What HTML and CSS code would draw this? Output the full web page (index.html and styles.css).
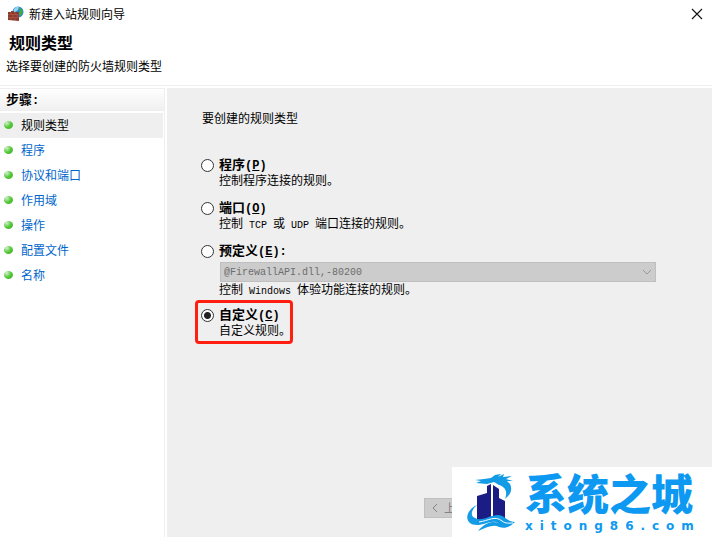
FILE: index.html
```
<!DOCTYPE html>
<html lang="zh-CN">
<head>
    <meta charset="UTF-8">
    <meta name="viewport" content="width=device-width, initial-scale=1.0">
    <title>新建入站规则向导</title>
    <link rel="stylesheet" href="styles.css">
</head>
<body>
    <div class="titlebar">
        <svg class="app-icon" width="16" height="16" viewBox="0 0 16 16" aria-hidden="true">
            <circle cx="10" cy="6" r="5.5" fill="#2f86cf"/>
            <path d="M6 3 Q8 0 11 1 L10 4 L7 6 L5 6Z" fill="#8cd4ef"/>
            <path d="M11 2 L14 3 L15 6 L13 10 L11 8 L12 5Z" fill="#3cac45"/>
            <path d="M0 6 H3 V5 H6 V6 H11 V15 L0 14Z" fill="#8b3b2d"/>
            <path d="M0 8.5 H11 M0 11.5 H11 M3 6 V8 M7 6 V8 M5 9 V11 M9 9 V11 M3 12 V14 M7 12 V14" stroke="#b5614d" stroke-width=".6"/>
        </svg>
        <span class="window-title">新建入站规则向导</span>
        <button class="close" aria-label="关闭">
            <svg width="12" height="12" viewBox="0 0 12 12"><path d="M1 1 L11 11 M11 1 L1 11" stroke="#111" stroke-width="1.1"/></svg>
        </button>
    </div>
    <header class="header">
        <h1>规则类型</h1>
        <p>选择要创建的防火墙规则类型</p>
    </header>
    <div class="wizard">
        <nav class="steps">
            <h2>步骤<span class="latin">:</span></h2>
            <ul>
                <li class="current"><i class="dot"></i><span>规则类型</span></li>
                <li><i class="dot"></i><a href="#">程序</a></li>
                <li><i class="dot"></i><a href="#">协议和端口</a></li>
                <li><i class="dot"></i><a href="#">作用域</a></li>
                <li><i class="dot"></i><a href="#">操作</a></li>
                <li><i class="dot"></i><a href="#">配置文件</a></li>
                <li><i class="dot"></i><a href="#">名称</a></li>
            </ul>
        </nav>
        <main class="content">
            <p class="question">要创建的规则类型</p>
            <form class="options">
                <div class="option">
                    <input type="radio" name="type" id="program">
                    <label for="program">程序<span class="latin">(<u>P</u>)</span></label>
                    <p>控制程序连接的规则。</p>
                </div>
                <div class="option">
                    <input type="radio" name="type" id="port">
                    <label for="port">端口<span class="latin">(<u>O</u>)</span></label>
                    <p>控制<span class="latin"> TCP </span>或<span class="latin"> UDP </span>端口连接的规则。</p>
                </div>
                <div class="option">
                    <input type="radio" name="type" id="predefined">
                    <label for="predefined">预定义<span class="latin">(<u>E</u>):</span></label>
                    <div class="select-wrap">
                        <select disabled aria-label="预定义">
                            <option>@FirewallAPI.dll,-80200</option>
                        </select>
                        <svg class="arrow" width="10" height="6" viewBox="0 0 10 6"><path d="M1 1 L5 5 L9 1" fill="none" stroke="#999"/></svg>
                    </div>
                    <p>控制<span class="latin"> Windows </span>体验功能连接的规则。</p>
                </div>
                <div class="option marked">
                    <input type="radio" name="type" id="custom" checked>
                    <label for="custom">自定义<span class="latin">(<u>C</u>)</span></label>
                    <p>自定义规则。</p>
                </div>
            </form>
            <div class="buttons">
                <button class="back" disabled>
                    <svg width="6" height="10" viewBox="0 0 6 10"><path d="M5 1 L1 5 L5 9" fill="none" stroke="#838383"/></svg>
                    上一步
                </button>
            </div>
        </main>
    </div>
    <div class="watermark">
        <svg width="50" height="60" viewBox="0 0 50 60" aria-hidden="true">
            <path d="M10 23 L20 20 V13 L24 11 V47 L10 50Z" fill="#1c1c85"/>
            <path d="M26 12 L32 16 V25 L38 28 V45 H26Z" fill="#1c1c85"/>
            <path d="M8 7 L17 6 L24 5 L28 2 L34 1 L31 4 L37 1 L36 4 L45 3 L39 6 L46 8 L40 8 L43 11 C46 17 43 22 38 26 C41 18 38 14 32 12 L27 9 L20 11 L9 10 L14 8Z" fill="#139be5"/>
            <path d="M10 32 C4 37 3 43 8 45 C15 49 23 42 31 42 C38 42 38 48 48 49 C43 54 38 56 32 54 C27 51 20 54 11 58 C17 51 24 47 31 50 C26 46 17 52 10 52 C-3 52 -3 38 10 32Z" fill="#139be5"/>
            <path d="M12 49 C21 48 28 42 35 48 C39 51 42 50 46 50" fill="none" stroke="#fff" stroke-width="1"/>
        </svg>
        <div class="brand">
            <strong>系统之城</strong>
            <span class="site"><span>x</span><span>i</span><span>t</span><span>o</span><span>n</span><span>g</span><span>8</span><span>6</span><span>.</span><span>c</span><span>o</span><span>m</span></span>
        </div>
    </div>
</body>
</html>
```
FILE: styles.css
```
* { box-sizing: border-box; }
body {
    margin: 0;
    min-height: 100vh;
    display: flex;
    flex-direction: column;
    background: #fff;
    color: #000;
    font: 12px/16px "Noto Sans CJK SC", sans-serif;
}
h1, h2, p, ul { margin: 0; padding: 0; }
button, select { font: inherit; }

/* SimSun style half-width latin */
.latin { font-family: "Liberation Mono", monospace; font-size: 10px; line-height: 1; white-space: pre; }

.titlebar { display: flex; align-items: center; height: 28px; padding: 0 8px; }
.window-title { flex: 1; margin-left: 5px; }
.close { display: flex; padding: 1px; border: 0; background: none; }

.header { height: 58px; padding: 2px 6px; border-bottom: 1px solid #efefef; }
.header h1 { padding-left: 3px; font-size: 16px; line-height: 24px; }
.header p { line-height: 24px; }

.wizard { flex: 1; display: flex; gap: 2px; padding-top: 2px; }
.steps { width: 165px; border-top: 1px solid #efefef; border-right: 1px solid #efefef; }
.steps h2 {
    height: 22px;
    padding-left: 6px;
    font-size: 13px;
    line-height: 20px;
    background: linear-gradient(#fff, #efefef);
}
.steps .latin, .option label .latin { font-size: 12px; }
.steps ul { padding: 2px 1px 0 0; list-style: none; }
.steps li { display: flex; align-items: center; gap: 8px; height: 25px; padding: 0 0 2px 4px; }
.steps .current { background: #efefef; }
.steps a { color: #0066cc; text-decoration: none; }
.dot {
    width: 9px;
    height: 8px;
    border-radius: 50%;
    background: radial-gradient(circle at 30% 25%, #d4f0cf, #52c835 50%, #43aa2b);
}

.content { flex: 1; display: flex; flex-direction: column; padding: 22px 56px 19px 28px; background: #efefef; }
.question { padding-left: 7px; }
.options { padding-top: 31px; }
.option {
    display: grid;
    grid-template-columns: 15px 1fr;
    column-gap: 3px;
    align-items: center;
    padding-left: 6px;
    margin-bottom: 11px;
    font-family: "Liberation Sans", "Noto Sans CJK SC", sans-serif;
}
.option p, .select-wrap { grid-column: 2; }
.option p { height: 16px; white-space: nowrap; }
.option label { height: 16px; font-size: 13px; font-weight: bold; line-height: 16px; }
.option input {
    appearance: none;
    width: 13px;
    height: 13px;
    margin: 0;
    border: 1px solid #333;
    border-radius: 50%;
    background: #fff;
}
.option input:checked { background: radial-gradient(circle, #222 3px, #fff 4px); }
.select-wrap { display: flex; align-items: center; padding: 3px 0 0 1px; }
.select-wrap select {
    appearance: none;
    width: 100%;
    height: 20px;
    padding: 0 3px;
    border: 1px solid #bfbfbf;
    border-radius: 0;
    background: #ccc;
    color: #6d6d6d;
    opacity: 1;
    font: 10px "Liberation Mono", monospace;
}
.arrow { margin-left: -14px; }
.marked {
    width: 98px;
    margin-top: -9px;
    padding: 4px 0 2px 3px;
    border: 3px solid #ff1e10;
    border-radius: 4px;
}

.buttons { display: flex; justify-content: flex-end; margin-top: auto; padding-right: 157px; }
.back {
    display: flex;
    align-items: center;
    gap: 6px;
    width: 75px;
    height: 20px;
    padding: 0 7px;
    border: 1px solid #bfbfbf;
    background: #ccc;
    color: #838383;
    white-space: nowrap;
}

.watermark {
    position: absolute;
    right: 0;
    bottom: 0;
    display: flex;
    align-items: flex-start;
    gap: 8px;
    width: 260px;
    height: 70px;
    padding: 6px 18px 0 15px;
    background: #fff;
    color: #0d99f2;
}
.brand { flex: 1; }
.brand strong {
    display: block;
    font: 900 42px/46px "Liberation Sans", "Noto Sans CJK SC", sans-serif;
    white-space: nowrap;
}
.site { display: flex; justify-content: space-between; font: bold 12px/14px "DejaVu Sans", sans-serif; }
```
